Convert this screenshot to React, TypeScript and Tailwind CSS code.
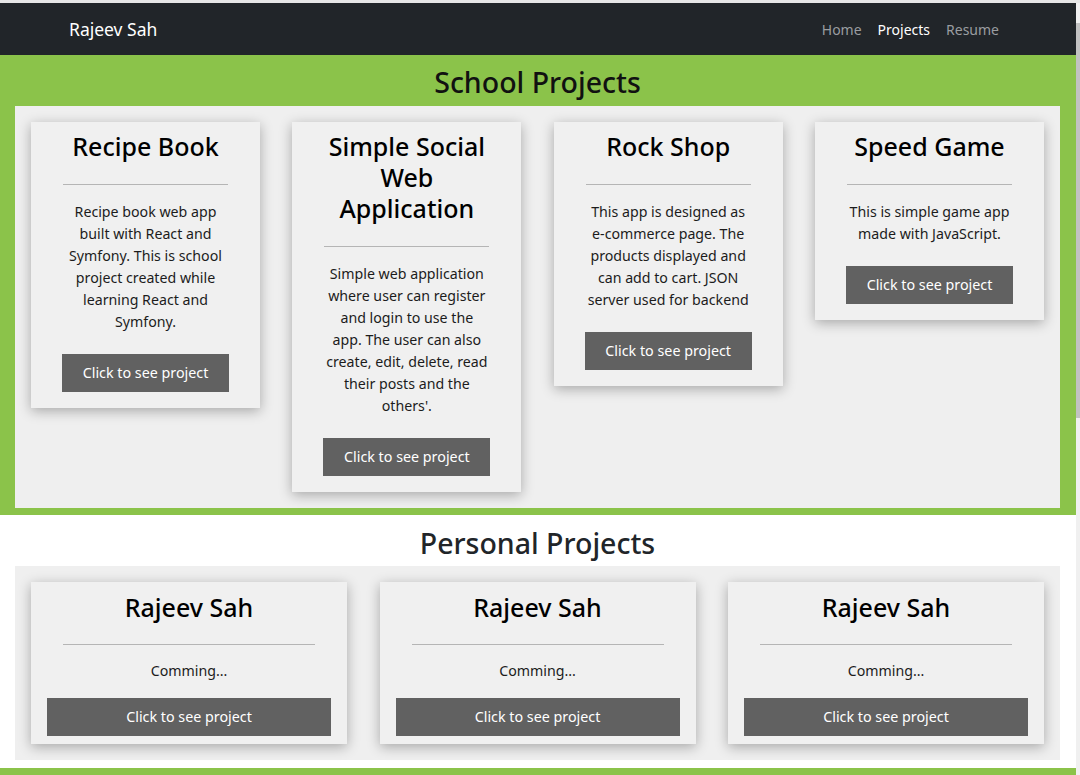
const font = { fontFamily: '"Noto Sans", "Open Sans", sans-serif' };

type Project = { title: string; text: string };

const school: Project[] = [
  {
    title: "Recipe Book",
    text: "Recipe book web app built with React and Symfony. This is school project created while learning React and Symfony.",
  },
  {
    title: "Simple Social Web Application",
    text: "Simple web application where user can register and login to use the app. The user can also create, edit, delete, read their posts and the others'.",
  },
  {
    title: "Rock Shop",
    text: "This app is designed as e-commerce page. The products displayed and can add to cart. JSON server used for backend",
  },
  {
    title: "Speed Game",
    text: "This is simple game app made with JavaScript.",
  },
];

const NavBar = () => (
  <nav className="flex h-[52px] shrink-0 items-center justify-between bg-[#212529] px-[69px]">
    <a href="#" className="text-[17.5px] text-white">
      Rajeev Sah
    </a>
    <div className="flex text-[14px]">
      <a href="#" className="px-2 text-[#9a9da0]">
        Home
      </a>
      <a href="#" className="px-2 text-white">
        Projects
      </a>
      <a href="#" className="px-2 text-[#9a9da0]">
        Resume
      </a>
    </div>
  </nav>
);

const SchoolCard = ({ title, text }: Project) => (
  <div className="flex w-[229px] flex-col bg-[#f0f0f0] px-8 pt-[9px] pb-4 text-center shadow-[0_3px_12px_rgba(0,0,0,0.3)]">
    <h3 className="text-[25px] font-medium leading-[31px] text-black">{title}</h3>
    <hr className="mt-[22px] mb-[16px] border-t border-[#b5b5b5]" />
    <p className="text-[14.2px] leading-[22px] text-[#1c1c1c]">{text}</p>
    <button className="mt-[21px] h-[38px] w-[167px] self-center bg-[#616161] text-[14.3px] text-white">
      Click to see project
    </button>
  </div>
);

const PersonalCard = () => (
  <div className="flex w-[316px] flex-col bg-[#f0f0f0] px-4 pt-[10px] pb-2 text-center shadow-[0_3px_12px_rgba(0,0,0,0.3)]">
    <h3 className="text-[25px] font-medium leading-[31px] text-black">Rajeev Sah</h3>
    <hr className="mx-4 mt-[21px] mb-[15px] border-t border-[#b5b5b5]" />
    <p className="text-[14.2px] leading-[22px] text-[#1c1c1c]">Comming...</p>
    <button className="mt-4 h-[38px] bg-[#616161] text-[14.3px] text-white">
      Click to see project
    </button>
  </div>
);

export default function App() {
  return (
    <div style={font} className="flex h-[775px] flex-col overflow-hidden bg-white">
      <div className="h-[3px] shrink-0 bg-[#e6e6e6]" />
      <div className="flex shrink-0">
        <div className="w-[1076px] shrink-0">
          <NavBar />

          <section className="bg-[#8bc34a] pr-4 pb-[7px] pl-[15px]">
            <h2 className="flex h-[51px] items-center justify-center pt-[4px] text-[28.5px] font-medium text-[#111]">
              School Projects
            </h2>
            <div className="flex items-start justify-between bg-[#efefef] p-4">
              {school.map((p) => (
                <SchoolCard key={p.title} {...p} />
              ))}
            </div>
          </section>

          <section className="bg-white pr-4 pb-2 pl-[15px]">
            <h2 className="flex h-[51px] items-center justify-center pt-[6px] text-[28.5px] font-medium text-[#212529]">
              Personal Projects
            </h2>
            <div className="flex items-start justify-between bg-[#efefef] p-4">
              <PersonalCard />
              <PersonalCard />
              <PersonalCard />
            </div>
          </section>

          <footer className="h-[60px] bg-[#8bc34a]" />
        </div>
        <div className="flex w-[4px] shrink-0 flex-col bg-[#f0f0f0] pt-[20px]">
          <div className="h-[395px] bg-[#c2c2c2]" />
        </div>
      </div>
    </div>
  );
}
